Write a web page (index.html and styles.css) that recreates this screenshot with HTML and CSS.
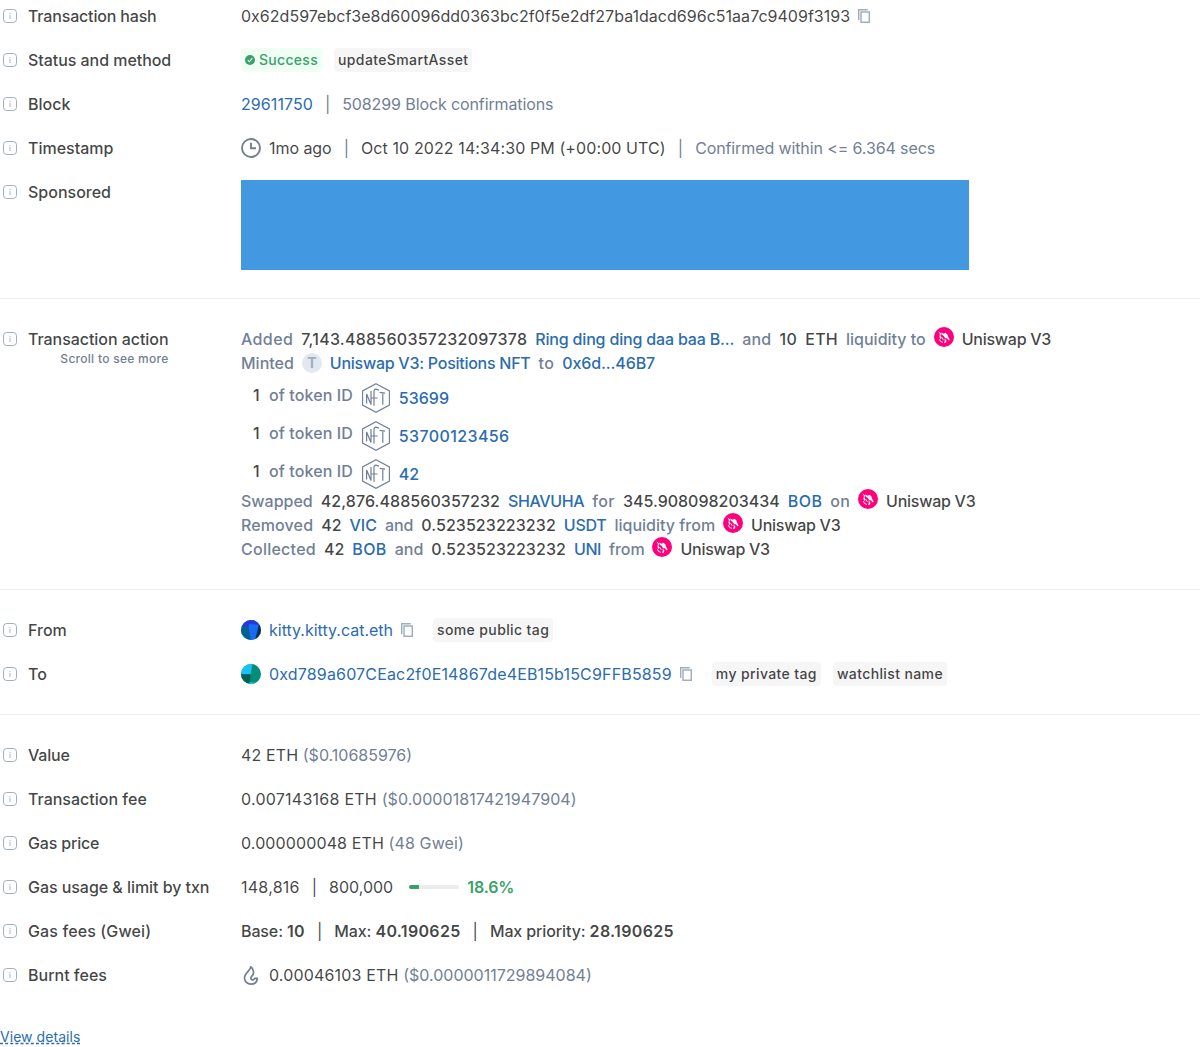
FILE: index.html
```html
<!DOCTYPE html>
<html lang="en">
<head>
<meta charset="utf-8">
<title>Transaction details</title>
<link rel="stylesheet" href="styles.css">
</head>
<body>
<svg class="sprite" aria-hidden="true">
  <symbol id="info" viewBox="0 0 20 20"><rect x="3.5" y="3.5" width="13" height="13" rx="3.2" fill="none" stroke="currentColor"/><path d="M9.4 7h1.2v1.2H9.4zM9.4 9.1h1.2V13H9.4z" fill="currentColor" opacity=".75"/></symbol>
  <symbol id="copy" viewBox="0 0 20 20"><path d="M4.7 14V3.7h9.1M7 6h8.3v10.3H7z" fill="none" stroke="currentColor" stroke-width="1.45"/></symbol>
  <symbol id="clock" viewBox="0 0 20 20"><g fill="none" stroke="currentColor" stroke-width="1.9"><circle cx="10" cy="10" r="9"/><path d="M10 4.8v5.4h5"/></g></symbol>
  <symbol id="check" viewBox="0 0 10 10"><circle cx="5" cy="5" r="5" fill="currentColor"/><path d="M2.8 5.2l1.6 1.6 2.9-3.6" fill="none" stroke="#fff" stroke-width="1.1"/></symbol>
  <symbol id="nft" viewBox="0 0 30 30"><g fill="none" stroke="currentColor"><path stroke-width="1.15" d="M15 .7l13.4 7.2v14.2L15 29.3 1.6 22.1V7.9z"/><path stroke-width="1.2" d="M5.6 20.5V11l4.4 10.5V8M13 22.8V8.6q0-2.2 2-2.4l3 .9M10.6 15h6M18.6 9.3l5.4.9M21.8 9.8v12"/></g></symbol>
  <symbol id="uniswap" viewBox="0 0 20 20"><circle cx="10" cy="10" r="10" fill="#ff007a"/><g fill="#fff"><path d="M7.2 5.6l2.6 1.1 1.6-1 1.9 1.5.7 2.2 1.6 3-.8 1.2-2-2.3-1.7-.1-1.2-2.2-2-1.2z"/><path d="M4.4 4.2l3 2.6-1 1.7 1.2 2.2-1.3 1.5-.8-2.5.4-2.7z"/><path d="M10.6 11.6l1.7 1.8-.3 2.1-2 .4.8-1.8z"/></g><path d="M5.3 12.2q.8 3 3.6 3.2M7.8 10.2l1.5 2.6" fill="none" stroke="#fff" stroke-width="1"/></symbol>
  <symbol id="flame" viewBox="0 0 20 20"><path d="M9.7 1.8c.3 3.6-6.2 5.8-6.2 11.1 0 3.7 2.9 6.2 6.5 6.2 3.3 0 6-2.2 6.4-5.7h-2.9c-.2 1.5-1.9 2-3 1.1-1.3-1.1-.6-2.5.8-3.9 2-2 1.6-6.6-1.6-8.8z" fill="none" stroke="currentColor" stroke-width="1.7" stroke-linejoin="round"/></symbol>
</svg>

<main class="details">
  <div class="row">
    <div class="label"><svg class="info"><use href="#info"/></svg><span class="tight">Transaction hash</span></div>
    <div class="value"><span class="hash">0x62d597ebcf3e8d60096dd0363bc2f0f5e2df27ba1dacd696c51aa7c9409f3193</span><svg class="copy"><use href="#copy"/></svg></div>
  </div>
  <div class="row">
    <div class="label"><svg class="info"><use href="#info"/></svg><span class="snug">Status and method</span></div>
    <div class="value tags"><span class="tag success"><svg><use href="#check"/></svg>Success</span><span class="tag">updateSmartAsset</span></div>
  </div>
  <div class="row">
    <div class="label"><svg class="info"><use href="#info"/></svg>Block</div>
    <div class="value"><a class="loose-0">29611750</a><span class="sep muted">|</span><span class="muted tight-1">508299 Block confirmations</span></div>
  </div>
  <div class="row">
    <div class="label"><svg class="info"><use href="#info"/></svg>Timestamp</div>
    <div class="value"><svg class="lead"><use href="#clock"/></svg><span class="snug">1mo ago</span><span class="sep muted">|</span><span class="date">Oct 10 2022 14:34:30 PM (+00:00 UTC)</span><span class="sep muted">|</span><span class="muted tight-1">Confirmed within &lt;= 6.364 secs</span></div>
  </div>
  <div class="row">
    <div class="label"><svg class="info"><use href="#info"/></svg>Sponsored</div>
    <div class="banner"></div>
  </div>

  <hr>

  <div class="row">
    <div class="label"><svg class="info"><use href="#info"/></svg><div class="scroll">Transaction action<small>Scroll to see more</small></div></div>
    <div class="actions">
      <div class="action"><i class="loose-3">Added</i><span class="loose-2">7,143.488560357232097378</span><a class="tight">Ring ding ding daa baa B...</a><i class="loose-2">and</i><span class="loose-3">10</span><span class="loose-2">ETH</span><i>liquidity to</i><svg class="dex"><use href="#uniswap"/></svg><span class="tight-2">Uniswap V3</span></div>
      <div class="action"><i>Minted</i><b class="token">T</b><a class="tight-2">Uniswap V3: Positions NFT</a><i class="loose-3">to</i><a class="tight-1">0x6d...46B7</a></div>
      <div class="action nft"><span>1</span><i>of token ID</i><svg><use href="#nft"/></svg><a>53699</a></div>
      <div class="action nft"><span>1</span><i>of token ID</i><svg><use href="#nft"/></svg><a class="loose-3">53700123456</a></div>
      <div class="action nft"><span>1</span><i>of token ID</i><svg><use href="#nft"/></svg><a>42</a></div>
      <div class="action"><i>Swapped</i><span class="loose-0">42,876.488560357232</span><a class="tight-3">SHAVUHA</a><i class="loose-3">for</i><span>345.908098203434</span><a class="loose-3">BOB</a><i class="loose-2">on</i><svg class="dex"><use href="#uniswap"/></svg><span class="tight-2">Uniswap V3</span></div>
      <div class="action"><i class="loose-1">Removed</i><span>42</span><a>VIC</a><i class="tight-1">and</i><span class="loose-0">0.523523223232</span><a class="tight-2">USDT</a><i>liquidity from</i><svg class="dex"><use href="#uniswap"/></svg><span class="tight-2">Uniswap V3</span></div>
      <div class="action"><i class="loose-2">Collected</i><span>42</span><a class="loose-3">BOB</a><i>and</i><span class="loose-0">0.523523223232</span><a class="tight-3">UNI</a><i class="tight-1">from</i><svg class="dex"><use href="#uniswap"/></svg><span class="tight-2">Uniswap V3</span></div>
    </div>
  </div>

  <hr>

  <div class="row">
    <div class="label"><svg class="info"><use href="#info"/></svg>From</div>
    <div class="value">
      <svg class="lead avatar" viewBox="0 0 20 20"><path fill="#186bf2" d="M0 0h20v20H0z"/><path fill="#006290" d="M0 6l7.5.5L9.8 20H0z"/><path fill="#2638dc" d="M0 0h20v5L8 4 7.5 7 0 6z"/><path fill="#043256" d="M18 4l2-1v17h-6z"/></svg>
      <a>kitty.kitty.cat.eth</a><svg class="copy"><use href="#copy"/></svg>
      <div class="tags after"><span class="tag">some public tag</span></div>
    </div>
  </div>
  <div class="row">
    <div class="label"><svg class="info"><use href="#info"/></svg>To</div>
    <div class="value">
      <svg class="lead avatar" viewBox="0 0 20 20"><path fill="#018e78" d="M0 0h20v20H0z"/><path fill="#18c2f2" d="M0 0h11.5L9.5 10.5H0z"/><path fill="#035e56" d="M0 10.2h9.3V20H0z"/><path fill="#18c2f2" d="M8 18.2l6 .4V20H8z"/></svg>
      <a class="address">0xd789a607CEac2f0E14867de4EB15b15C9FFB5859</a><svg class="copy"><use href="#copy"/></svg>
      <div class="tags after"><span class="tag">my private tag</span><span class="tag">watchlist name</span></div>
    </div>
  </div>

  <hr>

  <div class="row">
    <div class="label"><svg class="info"><use href="#info"/></svg><span class="tight">Value</span></div>
    <div class="value"><span class="loose-1">42 ETH <span class="muted level">($0.10685976)</span></span></div>
  </div>
  <div class="row">
    <div class="label"><svg class="info"><use href="#info"/></svg>Transaction fee</div>
    <div class="value"><span class="loose-2">0.007143168 ETH <span class="muted loose-0">($0.00001817421947904)</span></span></div>
  </div>
  <div class="row">
    <div class="label"><svg class="info"><use href="#info"/></svg><span class="tight">Gas price</span></div>
    <div class="value"><span class="loose-1">0.000000048 ETH <span class="muted">(48 Gwei)</span></span></div>
  </div>
  <div class="row">
    <div class="label"><svg class="info"><use href="#info"/></svg><span class="snug">Gas usage &amp; limit by txn</span></div>
    <div class="value"><span class="loose-2">148,816</span><span class="sep">|</span>800,000<div class="bar"><div class="fill" style="width: 18.6%"></div></div><span class="percent">18.6%</span></div>
  </div>
  <div class="row">
    <div class="label"><svg class="info"><use href="#info"/></svg><span class="loose-1">Gas fees (Gwei)</span></div>
    <div class="value"><span class="fee">Base: <b>10</b></span><span class="sep">|</span><span class="fee">Max: <b>40.190625</b></span><span class="sep">|</span><span class="fee">Max priority: <b>28.190625</b></span></div>
  </div>
  <div class="row">
    <div class="label"><svg class="info"><use href="#info"/></svg>Burnt fees</div>
    <div class="value"><svg class="lead"><use href="#flame"/></svg><span class="address">0.00046103 ETH <span class="muted level">($0.0000011729894084)</span></span></div>
  </div>

  <a class="more">View details</a>
</main>
</body>
</html>
```
FILE: styles.css
```css
* {
  box-sizing: border-box;
}

body {
  margin: 0;
  background: #fff;
  color: rgba(16, 17, 18, 0.8);
  font: 400 16px/24px Inter, sans-serif;
}

svg {
  display: block;
  flex: none;
}

.sprite {
  display: none;
}

.details {
  display: flex;
  flex-direction: column;
  gap: 20px;
  padding-top: 4px;
}

.row {
  display: grid;
  grid-template-columns: 241px 1fr;
  align-items: start;
}

hr {
  width: 100%;
  height: 1px;
  margin: 8px 0;
  border: 0;
  background: #eceded;
}

.label {
  display: flex;
  font-weight: 500;
}

.scroll {
  letter-spacing: -0.05px;
}

.label small {
  display: block;
  font-size: 12px;
  line-height: 16px;
  letter-spacing: 0.28px;
  color: #718096;
  text-align: right;
}

.info {
  width: 20px;
  height: 20px;
  margin: 2px 8px 2px 0;
  color: #a0aec0;
}

.value {
  display: flex;
  align-items: center;
  height: 24px;
  white-space: nowrap;
}

.copy {
  width: 20px;
  height: 20px;
  margin-left: 4px;
  color: #a0aec0;
}

.lead {
  width: 20px;
  height: 20px;
  margin-right: 8px;
  color: #718096;
}

.avatar {
  border-radius: 50%;
}

.muted {
  color: #718096;
}

a {
  color: #2b6cb0;
}

.sep {
  margin: 0 12px;
}

.tags {
  display: flex;
  gap: 12px;
}

.after {
  margin-left: 16px;
}

.tag {
  display: flex;
  align-items: center;
  height: 24px;
  padding: 0 4px;
  border-radius: 4px;
  background: rgba(16, 17, 18, 0.04);
  font-size: 14px;
  font-weight: 500;
  letter-spacing: 0.38px;
}

.success {
  gap: 4px;
  background: #f0fff4;
  color: #38a169;
  letter-spacing: 0.3px;
}

.success svg {
  width: 10px;
  height: 10px;
}

.banner {
  width: 728px;
  height: 90px;
  background: #4299e1;
}

.action {
  display: flex;
  align-items: center;
  gap: 8px;
  font-weight: 500;
  white-space: nowrap;
}

.action i {
  color: #718096;
  font-style: normal;
}

.dex {
  width: 20px;
  height: 20px;
  align-self: flex-start;
}

.token {
  width: 20px;
  height: 20px;
  border-radius: 50%;
  background: #e2e8f0;
  color: #a0aec0;
  font-size: 14px;
  font-weight: 700;
  line-height: 20px;
  text-align: center;
}

.nft {
  height: 30px;
  margin-top: 8px;
  padding-left: 12px;
}

.nft span,
.nft i {
  align-self: flex-start;
}

.nft span {
  width: 8px;
}

.nft i {
  letter-spacing: 0.1px;
}

.nft svg {
  width: 30px;
  height: 30px;
  color: #718096;
}

.bar {
  width: 50px;
  height: 4px;
  margin: 0 8px 0 16px;
  border-radius: 4px;
  overflow: hidden;
  background: #ececec;
}

.fill {
  height: 100%;
  background: #38a169;
}

.percent {
  color: #38a169;
  font-weight: 600;
  letter-spacing: -0.1px;
}

.fee {
  font-weight: 500;
  letter-spacing: -0.12px;
}

.fee b {
  font-weight: 600;
  letter-spacing: 0.32px;
}

.more {
  align-self: flex-start;
  margin-top: 20px;
  font-size: 14px;
  line-height: 20px;
  letter-spacing: 0.05px;
  text-decoration: underline dashed;
}

/* tracking */
.tight-3 { letter-spacing: -0.38px; }
.tight-2 { letter-spacing: -0.26px; }
.tight { letter-spacing: -0.17px; }
.tight-1 { letter-spacing: -0.11px; }
.snug { letter-spacing: -0.05px; }
.level { letter-spacing: 0; }
.hash { letter-spacing: 0.022px; }
.loose-0 { letter-spacing: 0.07px; }
.date { letter-spacing: 0.1px; }
.loose-1 { letter-spacing: 0.12px; }
.address { letter-spacing: 0.165px; }
.loose-2 { letter-spacing: 0.25px; }
.loose-3 { letter-spacing: 0.38px; }
```
